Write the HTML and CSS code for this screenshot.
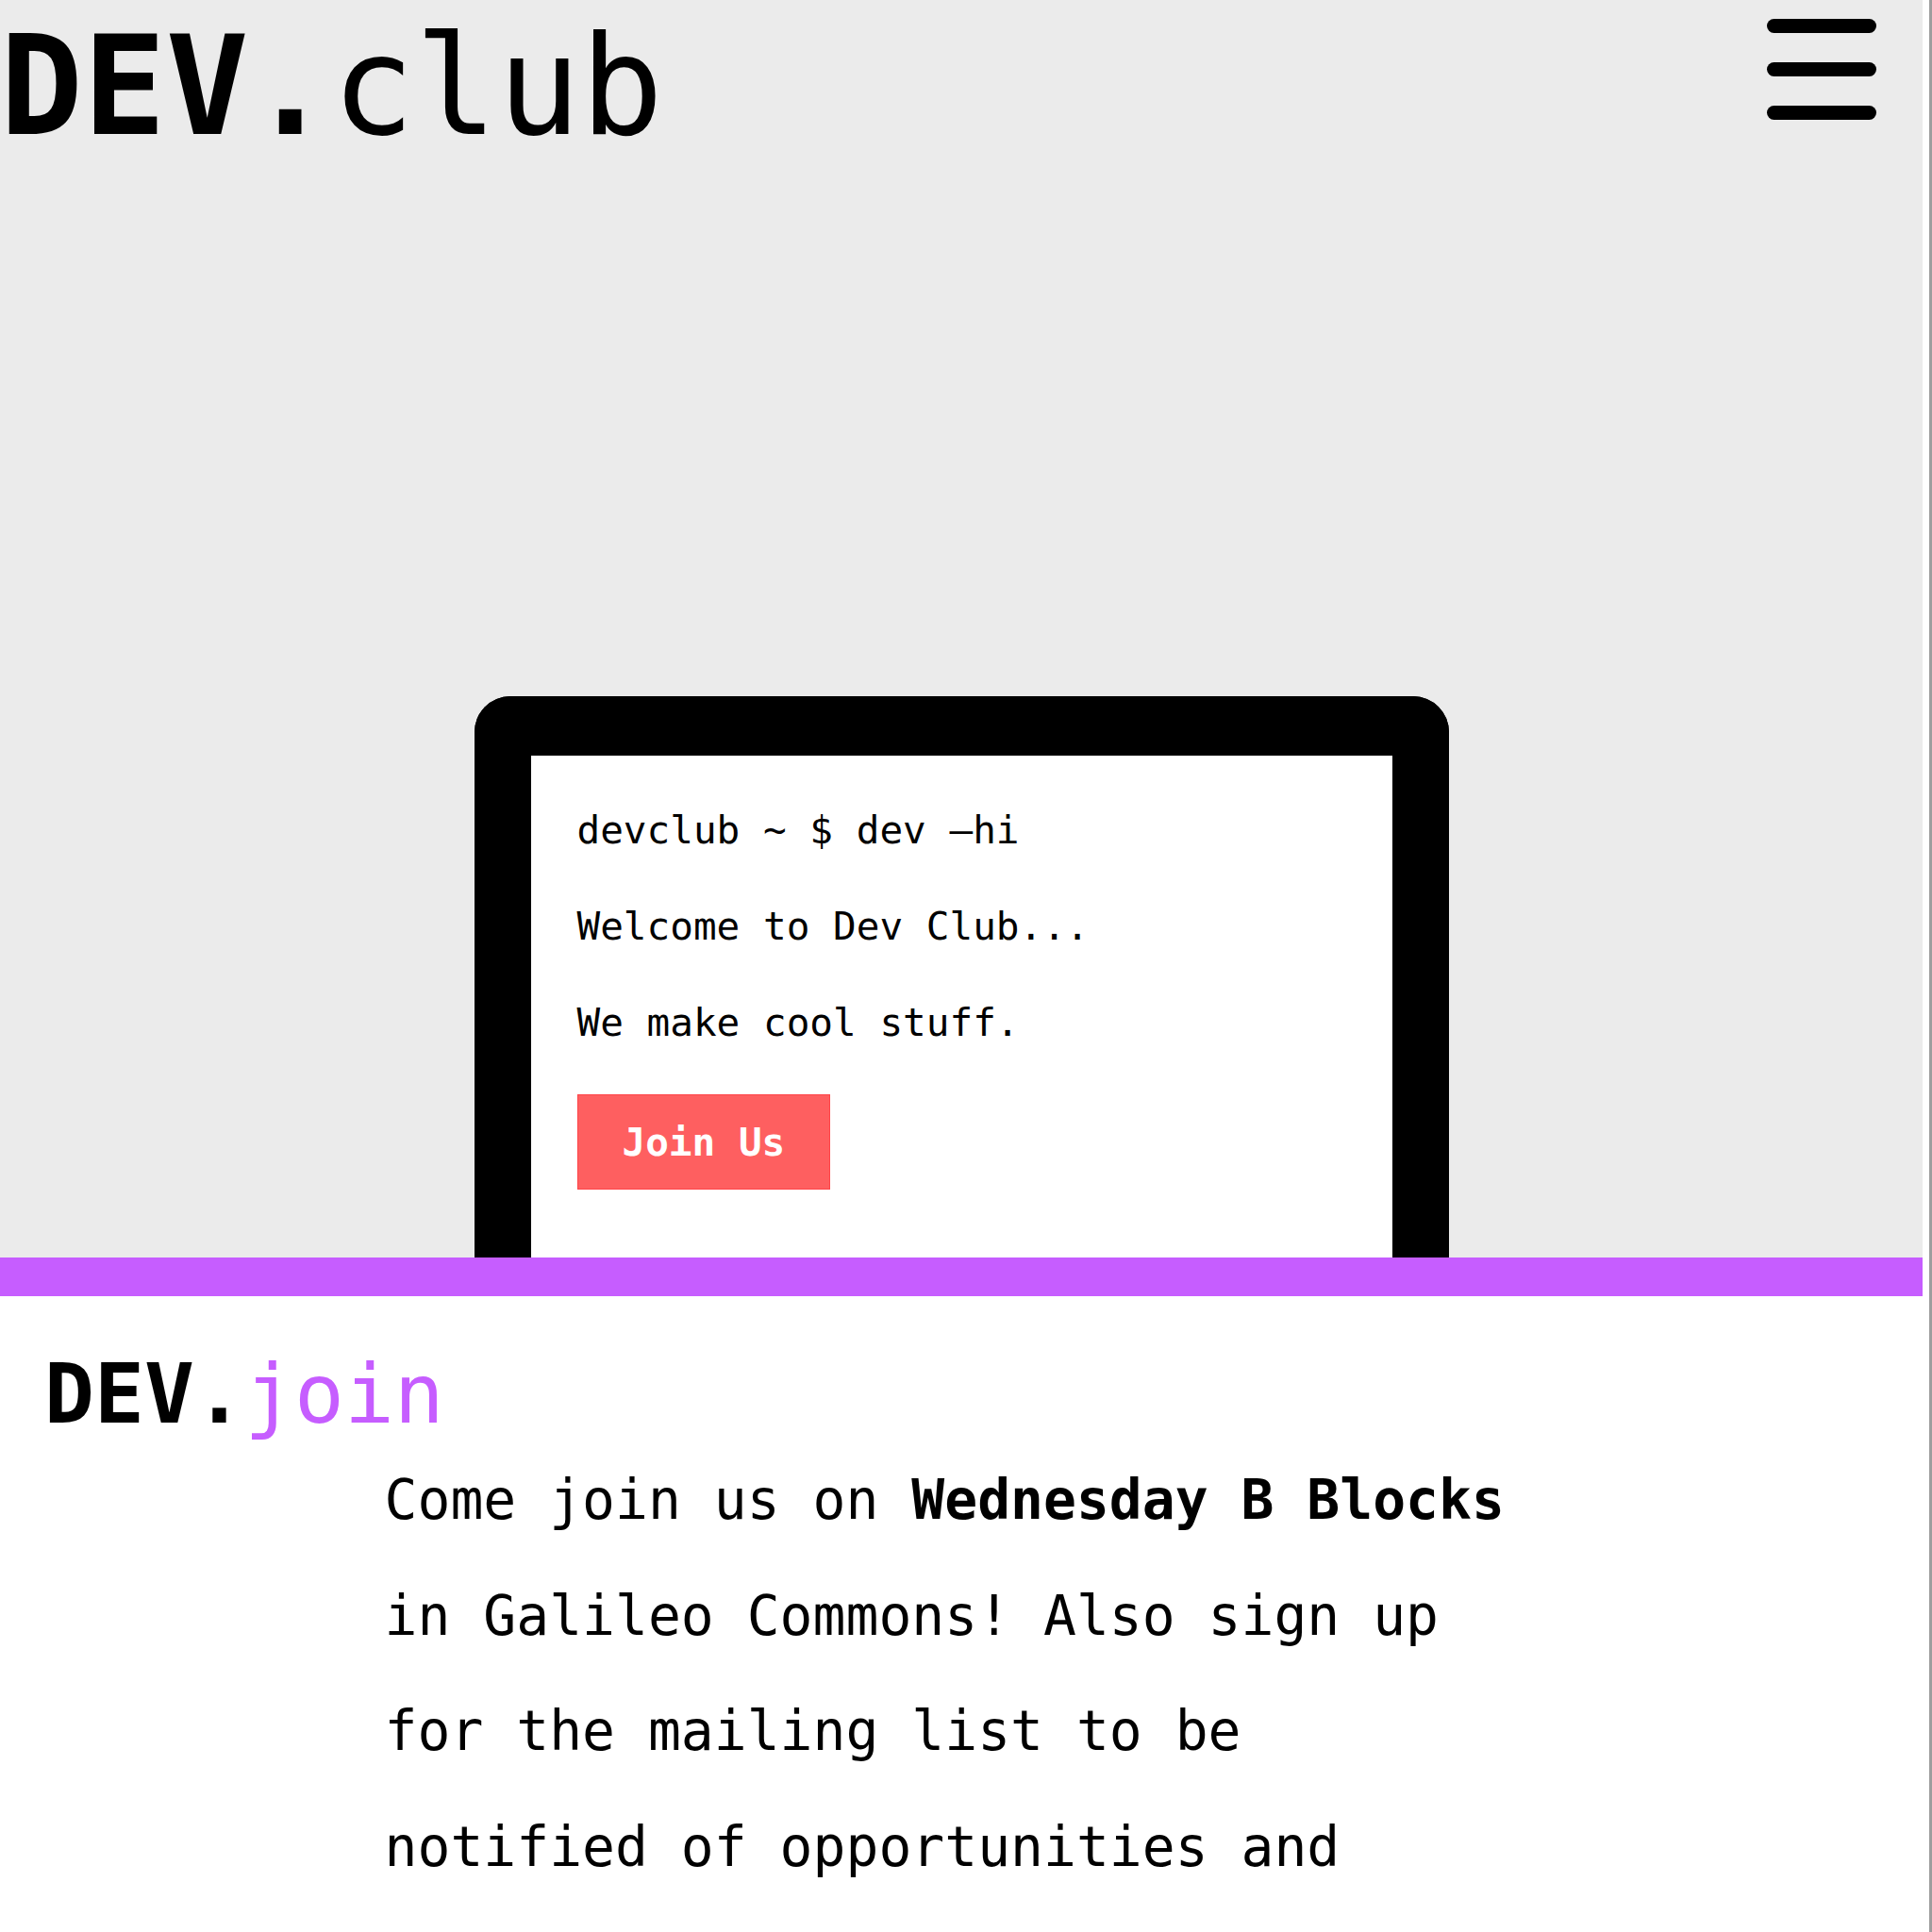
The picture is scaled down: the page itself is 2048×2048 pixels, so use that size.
FILE: index.html
```html
<!DOCTYPE html>
<html lang="en">
<head>
<meta charset="utf-8">
<title>DEV.club</title>
<link rel="stylesheet" href="styles.css">
</head>
<body>
<div class="page">
  <header class="hero">
    <div class="topbar">
      <h1 class="logo"><b>DEV.</b>club</h1>
      <div class="menu" aria-label="Menu"><span></span><span></span><span></span></div>
    </div>
    <div class="laptop">
      <div class="screen">
        <p>devclub ~ $ dev –hi</p>
        <p>Welcome to Dev Club...</p>
        <p>We make cool stuff.</p>
        <a class="btn" href="#join">Join Us</a>
      </div>
    </div>
  </header>
  <section class="join" id="join">
    <h2 class="join-title"><b>DEV.</b><span class="accent">join</span></h2>
    <p class="join-text">Come join us on <b>Wednesday B Blocks</b> in Galileo Commons! Also sign up for the mailing list to be notified of opportunities and events.</p>
  </section>
</div>
<div class="edge"></div>
</body>
</html>
```
FILE: styles.css
```css
html, body {
  margin: 0;
  padding: 0;
  background: #ffffff;
}

body {
  font-family: "DejaVu Sans Mono", "Liberation Mono", monospace;
  color: #000000;
}

.page {
  width: 2038px;
}

.hero {
  background: #ebebeb;
  height: 1333px;
  display: flex;
  flex-direction: column;
  overflow: hidden;
}

.topbar {
  display: flex;
  justify-content: space-between;
  align-items: flex-start;
}

.logo {
  margin: 0;
  padding-top: 6px;
  font-size: 146px;
  line-height: 170px;
  font-weight: normal;
}

.logo b {
  font-weight: bold;
}

.menu {
  display: flex;
  flex-direction: column;
  gap: 31px;
  margin: 20px 49px 0 0;
}

.menu span {
  display: block;
  width: 116px;
  height: 15px;
  border-radius: 8px;
  background: #000000;
}

.laptop {
  margin: auto auto 0;
  width: 913px;
  border-style: solid;
  border-color: #000000;
  border-width: 63px 60px 0;
  border-radius: 38px 38px 0 0;
}

.screen {
  background: #ffffff;
  padding: 49px 49px 72px;
  font-size: 41px;
  line-height: 60px;
  display: flex;
  flex-direction: column;
  align-items: flex-start;
}

.screen p {
  margin: 0 0 42px;
}

.screen p:last-of-type {
  margin-bottom: 46px;
}

.btn {
  background: #fe5f60;
  border: 1px solid #ff4448;
  color: #ffffff;
  font-weight: bold;
  padding: 19.5px 47px;
  text-decoration: none;
}

.join {
  border-top: 41px solid #c65dff;
  padding: 53px 0 40px;
}

.join-title {
  margin: 0 0 0 47px;
  font-size: 88px;
  line-height: 102px;
  font-weight: normal;
}

.join-title b {
  font-weight: bold;
}

.accent {
  color: #c65dff;
}

.join-text {
  margin: 0 21% 0 20%;
  font-size: 58px;
  line-height: 122.5px;
}

.edge {
  position: fixed;
  top: 0;
  right: 0;
  bottom: 0;
  width: 3px;
  background: #9d9d9d;
}
```
